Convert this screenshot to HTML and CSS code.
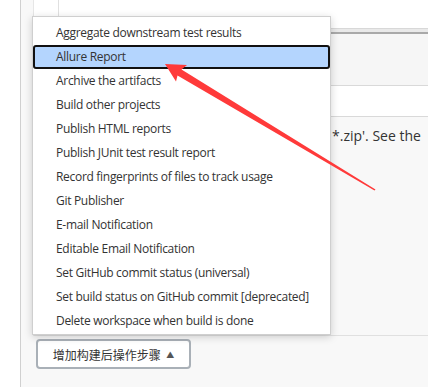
FILE: index.html
```html
<!DOCTYPE html>
<html lang="zh-CN">
<head>
    <meta charset="UTF-8">
    <meta name="viewport" content="width=device-width, initial-scale=1.0">
    <title>Post-build Actions</title>
    <link rel="stylesheet" href="styles.css">
</head>
<body>

<div class="page">
    <div class="gutter"></div>
    <div class="main">
        <div class="config-box">
            <div class="row row-top"><div class="cell-narrow"></div></div>
            <div class="row row-band"></div>
            <div class="row row-grey"></div>
            <div class="row row-white"></div>
            <div class="row row-help">
                <div class="help-label"></div>
                <p class="help-text">*.zip'. See the</p>
            </div>
        </div>
        <div class="button-row">
            <button class="add-button" type="button">增加构建后操作步骤 <span class="caret">&#9650;</span></button>
        </div>
    </div>

    <!-- dropdown opened by the button -->
    <ul class="menu">
        <li class="menu-item">Aggregate downstream test results</li>
        <li class="menu-item selected">Allure Report</li>
        <li class="menu-item">Archive the artifacts</li>
        <li class="menu-item">Build other projects</li>
        <li class="menu-item">Publish HTML reports</li>
        <li class="menu-item">Publish JUnit test result report</li>
        <li class="menu-item">Record fingerprints of files to track usage</li>
        <li class="menu-item">Git Publisher</li>
        <li class="menu-item">E-mail Notification</li>
        <li class="menu-item">Editable Email Notification</li>
        <li class="menu-item">Set GitHub commit status (universal)</li>
        <li class="menu-item">Set build status on GitHub commit [deprecated]</li>
        <li class="menu-item">Delete workspace when build is done</li>
    </ul>

    <!-- annotation arrow -->
    <svg class="annotation" width="428" height="387" viewBox="0 0 428 387">
        <polygon fill="#ff3a3a" points="165,64 187,65 181.5,69.5 375.5,189.5 374.5,190.5 177.5,75.5 176,81.5"/>
    </svg>
</div>

</body>
</html>
```

FILE: styles.css
```css
body {
    margin: 0;
    padding: 0;
    background-color: #fff;
    color: #333;
    font-family: 'Open Sans', 'Noto Sans CJK SC', sans-serif;
}

.page {
    position: relative;
    display: flex;
    height: 387px;
    overflow: hidden;
}

.gutter {
    width: 20px;
    flex-shrink: 0;
}

.main {
    flex: 1;
    border-left: 1px solid #d0d0d0;
    background-color: #f8f8f8;
    padding-left: 12px;
}

.config-box {
    border-left: 1px solid #e6e6e6;
}

.row {
    box-sizing: border-box;
}

.row-top {
    height: 28px;
    background: #fff;
}

.cell-narrow {
    width: 24px;
    height: 100%;
    border-right: 1px solid #e0e0e0;
}

.row-band {
    height: 6px;
    background: #e9e9e9;
    border-top: 1px solid #d8d8d8;
    border-bottom: 2px solid #a9a9a9;
}

.row-grey {
    height: 52px;
    background: #f6f6f6;
    border-bottom: 1px solid #d9d9d9;
}

.row-white {
    height: 31px;
    background: #fff;
    border-bottom: 1px solid #d9d9d9;
}

.row-help {
    display: flex;
    height: 219px;
    background: #f8f8f8;
    border-bottom: 1px solid #e0e0e0;
    overflow: hidden;
}

.help-label {
    width: 298px;
    flex-shrink: 0;
}

.help-text {
    margin: 9px 0 0 0;
    font-size: 14px;
    white-space: nowrap;
    color: #333;
}

.button-row {
    padding: 3px 0 0 3px;
}

.add-button {
    width: 155px;
    height: 30px;
    background: #fff;
    border: 2px solid #a9b0b7;
    border-radius: 4px;
    font-family: 'Noto Sans CJK SC', sans-serif;
    font-size: 12px;
    color: #333;
    padding: 0;
}

.caret {
    font-size: 8px;
    margin-left: 3px;
    vertical-align: 2px;
    color: #555;
}

.menu {
    position: absolute;
    left: 32px;
    top: 16px;
    width: 297px;
    margin: 0;
    padding: 4px 0 1px 0;
    list-style: none;
    background: #fff;
    border: 1px solid #cfcfcf;
    box-shadow: 0 2px 8px rgba(0, 0, 0, 0.18);
}

.menu-item {
    height: 24px;
    line-height: 24px;
    padding-left: 23px;
    font-size: 12px;
    letter-spacing: -0.3px;
    color: #333;
    white-space: nowrap;
    box-sizing: border-box;
}

.menu-item.selected {
    background: #b4d5fe;
    border: 2px solid #111;
    border-radius: 3px;
    line-height: 20px;
    padding-left: 21px;
}

.annotation {
    position: absolute;
    left: 0;
    top: 0;
    pointer-events: none;
}
```
